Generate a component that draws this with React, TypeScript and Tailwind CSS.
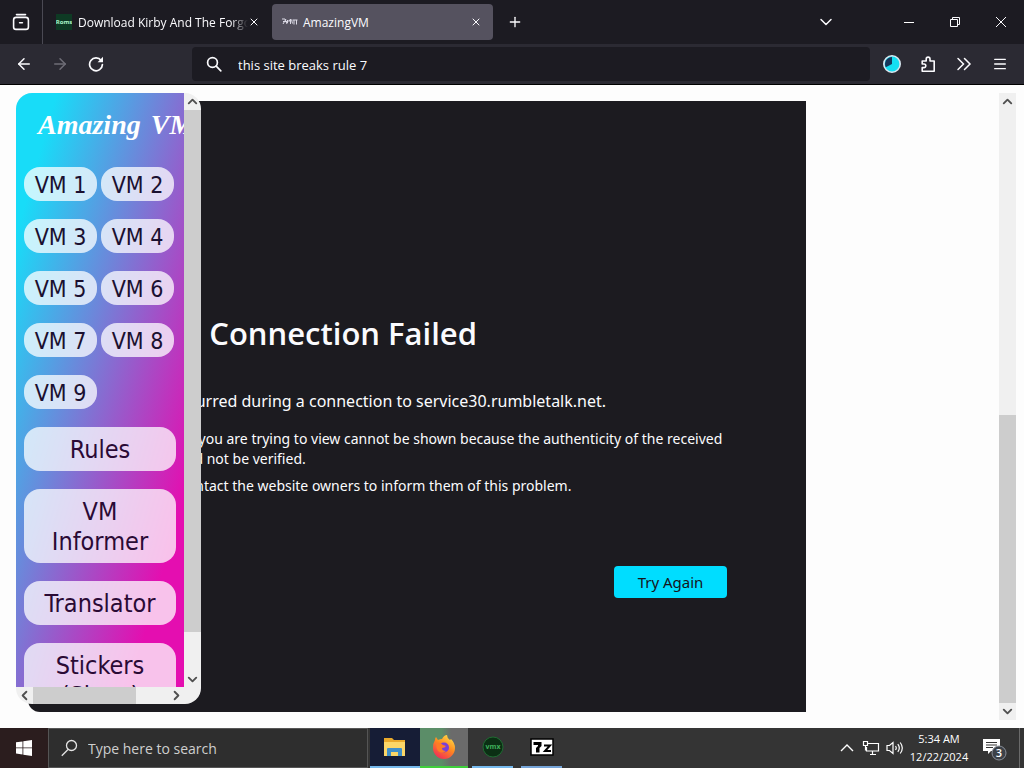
import type { ReactNode } from "react";
import {
  ArrowLeft,
  ArrowRight,
  ChevronDown,
  ChevronLeft,
  ChevronRight,
  ChevronUp,
  Menu,
  Plus,
  X,
} from "lucide-react";

const vms = ["VM 1", "VM 2", "VM 3", "VM 4", "VM 5", "VM 6", "VM 7", "VM 8", "VM 9"];
const links = ["Rules", "VM Informer", "Translator", "Stickers (Signs)"];

function IconButton({
  label,
  className,
  children,
}: {
  label: string;
  className: string;
  children: ReactNode;
}) {
  return (
    <button aria-label={label} className={`flex shrink-0 items-center justify-center ${className}`}>
      {children}
    </button>
  );
}

function TitleBar() {
  return (
    <div className="flex h-11 shrink-0 items-center bg-[#1c1b22] text-[#fbfbfe]">
      <IconButton label="Firefox View" className="h-full w-[43px] border-r border-[#4a4953]">
        <svg width="18" height="18" viewBox="0 0 18 18" fill="none" stroke="currentColor" strokeWidth="1.6">
          <path d="M4.5 1.6h9" strokeLinecap="round" />
          <path d="M1.6 8V7q0-2.600 2.600-2.600h9.600q2.600 0 2.600 2.600v7q0 2.400-2.400 2.400H4q-2.400 0-2.400-2.400z" />
          <path d="M7.600 9.800h2.800" strokeLinecap="round" />
        </svg>
      </IconButton>

      <div className="ml-[5px] flex h-9 w-[220px] items-center pr-2 pl-2 text-[12px]">
        <svg width="16" height="16" viewBox="0 0 16 16" className="shrink-0">
          <rect width="16" height="16" fill="#0e3a24" />
          <text x="8" y="10" fontSize="6" fontWeight="700" textAnchor="middle" fill="#a9f5c9">
            Roms
          </text>
        </svg>
        <button className="ml-1.5 flex-1 overflow-hidden pt-0.5 text-left whitespace-nowrap [mask-image:linear-gradient(to_right,black_90%,transparent)]">
          Download Kirby And The Forgotten Land
        </button>
        <IconButton label="Close tab" className="h-6 w-3">
          <X size={12} strokeWidth={2} />
        </IconButton>
      </div>

      <div className="ml-1 flex h-9 w-[221px] items-center rounded bg-[#55525f] pr-2 pl-2.5 text-[12px]">
        <svg width="16" height="16" viewBox="0 0 16 16" className="shrink-0" fill="none" stroke="#dcdae6">
          <path d="M0 5h3l2 5M1 10l3-5M1 7.500h4M5.500 9V6l1.500 1.500L8.500 5v5M9.500 5.500l1 4M10.500 6h5M12 6v4.500M14.500 6v4.500" />
        </svg>
        <button className="ml-[5px] flex-1 pt-0.5 text-left">AmazingVM</button>
        <IconButton label="Close tab" className="h-6 w-[18px]">
          <X size={12} strokeWidth={2} />
        </IconButton>
      </div>

      <IconButton label="New tab" className="ml-1 h-9 w-9">
        <Plus size={16} strokeWidth={2} />
      </IconButton>

      <div className="ml-auto flex h-full">
        <IconButton label="List all tabs" className="mr-11 w-8">
          <ChevronDown size={20} strokeWidth={1.8} />
        </IconButton>
        <IconButton label="Minimize" className="w-[46px]">
          <span className="h-px w-2.5 bg-white" />
        </IconButton>
        <IconButton label="Restore" className="w-[46px]">
          <svg width="12" height="12" viewBox="0 0 12 12" fill="none" stroke="currentColor">
            <path d="M1.500 3.500h7v7h-7zM3.500 3.500v-2h7v7h-2" />
          </svg>
        </IconButton>
        <IconButton label="Close" className="w-[46px]">
          <svg width="12" height="12" viewBox="0 0 12 12" stroke="currentColor">
            <path d="M1 1l10 10M11 1 1 11" />
          </svg>
        </IconButton>
      </div>
    </div>
  );
}

function Toolbar() {
  return (
    <div className="flex h-[41px] shrink-0 items-center border-b border-black bg-[#2b2a33] px-1.5 text-[#fbfbfe]">
      <IconButton label="Back" className="h-8 w-9">
        <ArrowLeft size={18} strokeWidth={2} />
      </IconButton>
      <IconButton label="Forward" className="h-8 w-9 text-[#6f6e77]">
        <ArrowRight size={18} strokeWidth={2} />
      </IconButton>
      <IconButton label="Reload" className="h-8 w-9">
        <svg width="16" height="16" viewBox="0 0 16 16" fill="none" stroke="currentColor" strokeWidth="1.7">
          <path d="M13.200 4.600A6.400 6.400 0 1 0 14.400 8.600" strokeLinecap="round" />
          <path d="M15 .8v5.400H9.600z" fill="currentColor" stroke="none" />
        </svg>
      </IconButton>

      <label className="mr-1 ml-[78px] flex h-[34px] min-w-0 flex-1 items-center rounded bg-[#1c1b22] pl-3.5">
        <svg width="16" height="16" viewBox="0 0 16 16" fill="none" stroke="currentColor" strokeWidth="1.7" className="shrink-0">
          <circle cx="6.500" cy="6.500" r="4.900" />
          <path d="M10.200 10.200l4.600 4.600" strokeLinecap="round" />
        </svg>
        <input
          aria-label="Address"
          defaultValue="this site breaks rule 7"
          className="ml-4 min-w-0 flex-1 bg-transparent pt-[3px] text-[13px] outline-none"
        />
      </label>

      <IconButton label="Cookie extension" className="h-8 w-9">
        <svg width="20" height="20" viewBox="0 0 20 20">
          <circle cx="10" cy="10" r="8.200" fill="#14dff2" stroke="#d8e6f0" strokeWidth="1.600" />
          <path d="M10 10V3a7 7 0 0 0-6.200 10.200z" fill="#15365a" />
        </svg>
      </IconButton>
      <IconButton label="Extensions" className="h-8 w-9">
        <svg width="18" height="18" viewBox="0 0 18 18" fill="none" stroke="currentColor" strokeWidth="1.600" strokeLinejoin="round">
          <path d="M3.200 16.200V12.600H5a1.800 1.800 0 0 0 0-3.600H3.200V6h4V4a1.900 1.900 0 0 1 3.800 0v2h4.200v10.200z" />
        </svg>
      </IconButton>
      <IconButton label="More tools" className="h-8 w-9">
        <svg width="16" height="16" viewBox="0 0 16 16" fill="none" stroke="currentColor" strokeWidth="1.500">
          <path d="M2 2.500 7.500 8 2 13.500M8.500 2.500 14 8l-5.500 5.500" strokeLinecap="round" />
        </svg>
      </IconButton>
      <IconButton label="Menu" className="h-8 w-9">
        <Menu size={16} strokeWidth={2} />
      </IconButton>
    </div>
  );
}

function Sidebar() {
  return (
    <aside className="z-10 col-start-1 row-start-1 ml-2 mb-4 grid min-h-0 w-[185px] grid-cols-[1fr_17px] grid-rows-[1fr_17px] overflow-hidden rounded-2xl bg-[#f0f0f0] [font-family:'DejaVu_Sans_Condensed','DejaVu_Sans',sans-serif]">
      <div className="min-h-0 overflow-hidden bg-[linear-gradient(106deg,#18dcf8_12%,#e40eb0_84%)] px-2">
        <h1 className="flex h-[74px] items-start gap-2.5 pt-3.5 pl-3.5 [font-family:'Liberation_Serif',serif] text-[28px] leading-9 font-bold whitespace-nowrap text-white italic">
          <span>Amazing</span> <span>VM</span>
        </h1>
        <div className="flex flex-wrap gap-x-1 gap-y-[18px] text-[23px] leading-8 text-[#1b1030]">
          {vms.map((vm) => (
            <button key={vm} className="h-[34px] w-[73px] rounded-2xl bg-white/75 pt-0.5 whitespace-nowrap">
              {vm}
            </button>
          ))}
        </div>
        <nav className="mt-[18px] flex flex-col gap-[18px] text-center text-[25px] leading-[30px] text-[#2a0a35]">
          {links.map((link) => (
            <a key={link} href="#" className="rounded-2xl bg-white/75 px-5 pt-2 pb-1.5">
              {link}
            </a>
          ))}
        </nav>
      </div>

      <div className="flex flex-col items-center text-[#505050]">
        <ChevronUp size={15} strokeWidth={3} className="my-px" />
        <div className="h-[522px] w-full bg-[#cdcdcd]" />
        <ChevronDown size={15} strokeWidth={3} className="mt-auto" />
      </div>
      <div className="flex items-center text-[#505050]">
        <ChevronLeft size={15} strokeWidth={3} className="mx-px" />
        <div className="h-full w-[103px] bg-[#cdcdcd]" />
        <ChevronRight size={15} strokeWidth={3} className="ml-auto" />
      </div>
    </aside>
  );
}

function ErrorFrame() {
  return (
    <section className="col-start-1 row-start-1 my-2 ml-5 w-full max-w-[778px] rounded-bl-xl bg-[#1c1b20] pt-[210px] pr-[79px] pl-[72px] [font-family:'Noto_Sans',sans-serif] text-[#fbfbfe]">
      <h2 className="text-[31px] leading-[44px] font-semibold whitespace-nowrap [font-family:'Open_Sans',sans-serif]">
        Secure Connection Failed
      </h2>
      <p className="mt-9 pl-1 text-[16px] leading-5 whitespace-nowrap">
        An error occurred during a connection to service30.rumbletalk.net.
      </p>
      <ul className="mt-[18px] flex flex-col gap-[7px] pl-[34px] text-[14px] leading-5 whitespace-nowrap">
        <li>
          The page you are trying to view cannot be shown because the authenticity of the received
          <br />
          data could not be verified.
        </li>
        <li>Please contact the website owners to inform them of this problem.</li>
      </ul>
      <div className="mt-[70px] flex justify-end">
        <button className="h-8 w-[113px] rounded bg-[#00ddff] text-[15px] text-[#15141a]">Try Again</button>
      </div>
    </section>
  );
}

function PageScrollbar() {
  return (
    <div className="flex w-[17px] shrink-0 flex-col items-center bg-[#f0f0f0] text-[#505050]">
      <ChevronUp size={15} strokeWidth={3} className="my-px" />
      <div className="mt-auto h-[288px] w-full bg-[#cdcdcd]" />
      <ChevronDown size={15} strokeWidth={3} className="my-px" />
    </div>
  );
}

function Taskbar() {
  return (
    <footer className="flex h-10 shrink-0 bg-[#343434] text-white">
      <IconButton label="Start" className="w-12 bg-[#2b1d1e]">
        <svg width="16" height="16" viewBox="0 0 16 16" fill="white">
          <path d="M0 2.300 6.500 1.400v6.100H0zM7.300 1.300 16 0v7.500H7.300zM0 8.300h6.500v6.200L0 13.600zM7.300 8.300H16V16l-8.700-1.300z" />
        </svg>
      </IconButton>
      <label className="flex w-80 items-center border border-[#555] bg-[#2e2e2e] pl-3">
        <svg width="18" height="18" viewBox="0 0 18 18" fill="none" stroke="#e4e4e4" strokeWidth="1.300">
          <circle cx="10.500" cy="6.500" r="5" />
          <path d="M7 10.500.8 16.800" />
        </svg>
        <input
          aria-label="Search"
          placeholder="Type here to search"
          className="ml-[9px] min-w-0 flex-1 bg-transparent text-[14px] outline-none placeholder:text-[#cfcfcf]"
        />
      </label>

      <IconButton label="File Explorer" className="ml-0.5 w-[50px] border-b-2 border-[#76b9ed] bg-[#161d36]">
        <svg width="22" height="20" viewBox="0 0 22 20">
          <path d="M0 1h8l2 2h11v16H0z" fill="#e9a92b" />
          <path d="M0 5h21v14H0z" fill="#fbd667" />
          <path d="M3 19v-7q0-1 1-1h13q1 0 1 1v7h-4v-4H7v4z" fill="#3f8fc9" />
        </svg>
      </IconButton>
      <IconButton
        label="Firefox"
        className="w-12 border-b-2 border-[#3fd03c] bg-[linear-gradient(to_right,#5b8d68_45%,#6b6b6b_65%)]"
      >
        <svg width="24" height="24" viewBox="0 0 24 24">
          <defs>
            <linearGradient id="fox" x1="0.800" y1="0" x2="0.200" y2="1">
              <stop offset="0" stopColor="#ffe14a" />
              <stop offset="0.450" stopColor="#ff8a1f" />
              <stop offset="1" stopColor="#f0255c" />
            </linearGradient>
          </defs>
          <path
            d="M3 5q0-2 1-3l2 3q2-1 4-1Q12 0 15 0q0 3 3 5l1-1q4 4 4 9a11 11 0 0 1-22 0q0-5 2-8z"
            fill="url(#fox)"
          />
          <circle cx="12" cy="12.500" r="5" fill="#7b3fd6" />
          <path d="M4 8q4-1 7 2l3 1q-1 2-4 2 0 3 4 3-4 3-8 0-2-3-2-8z" fill="#ff7b26" />
        </svg>
      </IconButton>
      <IconButton label="VM" className="ml-1 w-[41px] border-b-2 border-[#76b9ed]">
        <svg width="22" height="22" viewBox="0 0 22 22">
          <circle cx="11" cy="11" r="10" fill="#0b2f14" stroke="#1f6b32" />
          <text x="11" y="13" fontSize="7" fontWeight="700" textAnchor="middle" fill="#3fae5a">
            vmx
          </text>
        </svg>
      </IconButton>
      <IconButton label="7-Zip" className="ml-2 w-[41px] border-b-2 border-[#76a5d8]">
        <svg width="24" height="18" viewBox="0 0 24 18">
          <rect x="1" y="1" width="22" height="16" fill="white" stroke="black" strokeWidth="1.500" />
          <path d="M3.500 4h8v4l-2 2v4.500H6V10l2-2V7H3.500z" fill="black" />
          <path d="M14 7.500h6L15 13h6" fill="none" stroke="black" strokeWidth="2" />
        </svg>
      </IconButton>

      <div className="ml-auto flex items-center">
        <IconButton label="Show hidden icons" className="w-6">
          <svg width="14" height="8" viewBox="0 0 14 8" fill="none" stroke="white" strokeWidth="1.400">
            <path d="M1 7l6-6 6 6" />
          </svg>
        </IconButton>
        <IconButton label="Network" className="w-6">
          <svg width="18" height="16" viewBox="0 0 18 16" fill="none" stroke="white" strokeWidth="1.200">
            <path d="M6 3.500h10.500v7.500H4.500V7M8 14.500h6M10.500 11v3.500" />
            <path d="M1.500 1.500h4v4h-4zM3.500 5.500v5" />
          </svg>
        </IconButton>
        <IconButton label="Volume" className="w-6">
          <svg width="18" height="14" viewBox="0 0 18 14" fill="none" stroke="white" strokeWidth="1.200">
            <path d="M1 4.500h2.500L7 1.500v11l-3.500-3H1z" />
            <path d="M9.500 5q1.500 2 0 4M11.800 3.200q3 3.800 0 7.600M14.200 1.500q4.200 5.500 0 11" />
          </svg>
        </IconButton>
        <div className="w-16 text-center text-[11px] leading-[18px]">
          <div>5:34 AM</div>
          <div>12/22/2024</div>
        </div>
        <IconButton label="Notifications" className="w-12">
          <svg width="28" height="26" viewBox="0 0 28 26">
            <path d="M2 4h17v12h-9l-3 3v-3H2z" fill="white" />
            <path d="M5 7.500h11M5 10h11M5 12.500h7" stroke="#343434" />
            <circle cx="18" cy="18" r="7" fill="#3c4148" stroke="#8a8f98" />
            <text x="18" y="22" fontSize="11" fontWeight="600" textAnchor="middle" fill="white">
              3
            </text>
          </svg>
        </IconButton>
        <div className="h-10 w-[5px] border-l border-[#6a6a6a]" />
      </div>
    </footer>
  );
}

export default function App() {
  return (
    <div className="flex h-screen flex-col overflow-hidden bg-[#fdfdfd] [font-family:'Open_Sans','Noto_Sans',sans-serif]">
      <TitleBar />
      <Toolbar />
      <main className="flex min-h-0 flex-1 p-2">
        <div className="grid min-h-0 min-w-0 flex-1 grid-cols-1 grid-rows-[minmax(0,1fr)]">
          <ErrorFrame />
          <Sidebar />
        </div>
        <PageScrollbar />
      </main>
      <Taskbar />
    </div>
  );
}
